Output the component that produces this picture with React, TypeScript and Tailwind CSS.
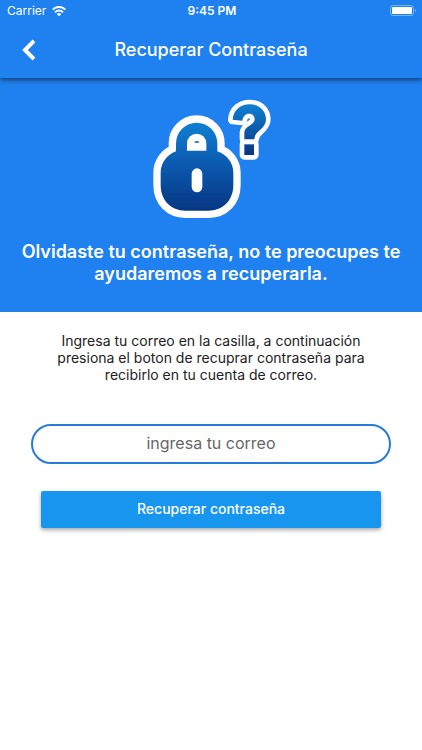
import type { FormEvent } from 'react';

function StatusBar() {
  return (
    <div className="grid h-[22px] grid-cols-3 items-center pl-[7px] pr-[5px] text-xs text-white">
      <div className="flex items-center gap-[6px]">
        <span>Carrier</span>
        <svg width="14" height="10" viewBox="0 0 42 30" fill="none" stroke="currentColor" strokeWidth="6">
          <path d="M2 11 C13 0 29 0 40 11" />
          <path d="M9 19 C16 12 26 12 33 19" />
          <path d="M14 24 C18 20 24 20 28 24 L21 31 Z" fill="currentColor" stroke="none" />
        </svg>
      </div>
      <span className="text-center font-semibold">9:45 PM</span>
      <svg className="justify-self-end" width="27" height="12" viewBox="0 0 27 12">
        <rect x="0.5" y="0.5" width="23" height="10" rx="2.5" fill="none" stroke="#fff" strokeOpacity="0.4" />
        <rect x="2" y="2" width="20" height="7" rx="1" fill="#fff" />
        <path d="M25 4 C26.6 4.5 26.6 6.5 25 7 Z" fill="#fff" fillOpacity="0.4" />
      </svg>
    </div>
  );
}

function LockIcon() {
  const body =
    'M108 184 V160 A62 62 0 0 1 232 160 V184 C262 194 280 220 280 248 V285 C280 330 250 362 205 362 H137 C92 362 62 330 62 285 V248 C62 220 80 194 108 184 Z';
  const hook =
    'M278 89 C280 60 302 43 329 43 C358 43 378 62 378 88 C378 118 344 122 343 148 H313 V128 C313 108 344 106 344 88 C344 77 336 71 327 71 C316 71 309 79 307 92 Z';

  return (
    <svg className="size-[120px]" viewBox="33 27 360 360" overflow="visible" aria-hidden="true">
      <defs>
        <linearGradient id="lock" x1="0" y1="98" x2="0" y2="362" gradientUnits="userSpaceOnUse">
          <stop offset="0" stopColor="#1080d2" />
          <stop offset="0.5" stopColor="#0b58ad" />
          <stop offset="1" stopColor="#063683" />
        </linearGradient>
        <linearGradient id="mark" x1="0" y1="43" x2="0" y2="194" gradientUnits="userSpaceOnUse">
          <stop offset="0" stopColor="#1080d2" />
          <stop offset="1" stopColor="#063683" />
        </linearGradient>
      </defs>
      <path d={body} fill="#fff" stroke="#fff" strokeWidth="44" />
      <path d={body} fill="url(#lock)" />
      <path d="M141 182 V160 A29 29 0 0 1 199 160 V182 Z" fill="#fff" />
      <path d="M163 158 C164 151 177 151 178 158 Z" fill="#0d68bd" />
      <rect x="155" y="235" width="32" height="72" rx="16" fill="#fff" />
      <g stroke="#fff" strokeWidth="28" strokeLinejoin="round" fill="#fff">
        <path d={hook} />
        <rect x="313" y="163" width="29" height="32" />
      </g>
      <path d={hook} fill="url(#mark)" />
      <rect x="313" y="163" width="29" height="32" fill="url(#mark)" />
      <circle cx="325" cy="88" r="2" fill="#1f80ef" />
    </svg>
  );
}

export default function App() {
  const handleSubmit = (event: FormEvent) => event.preventDefault();

  return (
    <div className="min-h-screen bg-white font-['Inter',sans-serif]">
      <header className="relative bg-[#1f80ef] shadow-[0_2px_5px_rgba(0,0,0,0.5)]">
        <StatusBar />
        <div className="grid h-14 grid-cols-[56px_1fr_56px] items-center text-white">
          <button type="button" aria-label="Volver" className="flex h-full items-center justify-center">
            <svg width="14" height="22" viewBox="-1 0 14 22" fill="none" stroke="currentColor" strokeWidth="4">
              <path d="M12 2 L3 11 L12 20" />
            </svg>
          </button>
          <h1 className="whitespace-nowrap text-center text-lg font-medium">Recuperar Contraseña</h1>
        </div>
      </header>

      <section className="flex flex-col items-center bg-[#1f80ef] px-4 pb-[27px] pt-[21px] text-white">
        <LockIcon />
        <h2 className="mt-[22px] text-center text-lg font-semibold leading-[22px]">
          Olvidaste tu contraseña, no te preocupes te ayudaremos a recuperarla.
        </h2>
      </section>

      <main className="px-[31px] pt-5">
        <p className="px-5 text-center text-sm leading-[17px] text-[#222]">
          Ingresa tu correo en la casilla, a continuación presiona el boton de recuprar contraseña para recibirlo en
          tu cuenta de correo.
        </p>
        <form onSubmit={handleSubmit} className="mt-[41px]">
          <input
            type="email"
            aria-label="Correo"
            placeholder="ingresa tu correo"
            className="h-10 w-full rounded-full border-2 border-[#257bdc] px-5 pb-0.5 text-center text-base text-[#222] outline-none placeholder:text-[#666]"
          />
          <div className="mt-[27px] px-[10px]">
            <button
              type="submit"
              className="h-[37px] w-full rounded-xs bg-[#1796f0] pb-0.5 text-sm font-medium text-white shadow-[0_2px_4px_rgba(0,0,0,0.35)]"
            >
              Recuperar contraseña
            </button>
          </div>
        </form>
      </main>
    </div>
  );
}
